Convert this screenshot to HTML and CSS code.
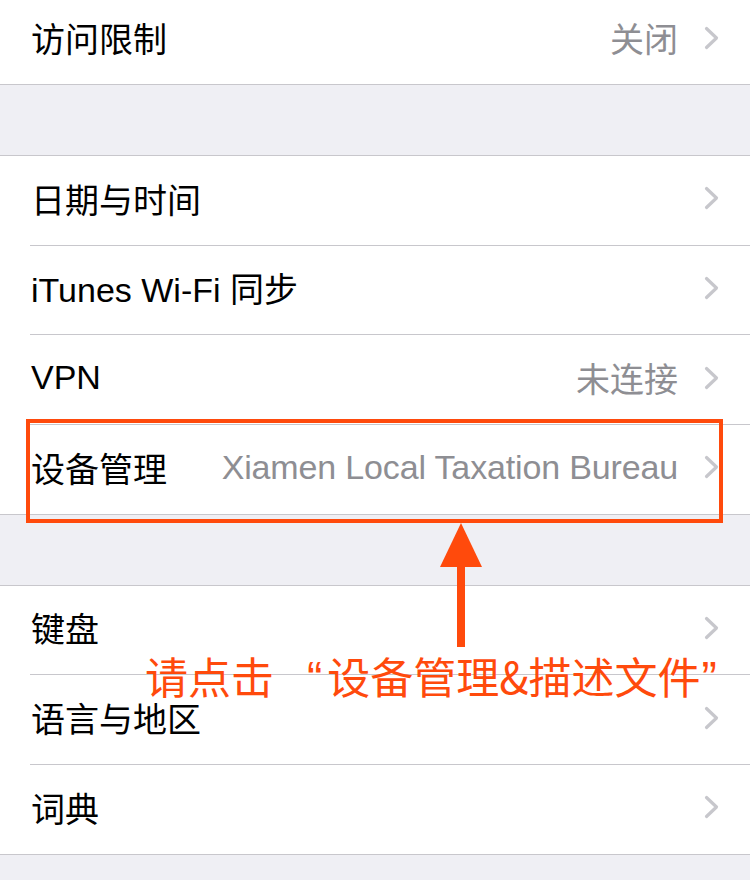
FILE: index.html
```html
<!DOCTYPE html>
<html lang="zh-CN">
<head>
<meta charset="utf-8">
<title>通用</title>
<link rel="stylesheet" href="styles.css">
</head>
<body>
<div class="page">
  <section class="group group-first">
    <div class="row"><span class="label">访问限制</span><span class="detail">关闭</span><svg class="chev" viewBox="0 0 16 24" width="16" height="24"><path d="M2.5 2.5 L12.5 12 L2.5 21.5"/></svg></div>
  </section>

  <section class="group">
    <div class="row"><span class="label">日期与时间</span><svg class="chev" viewBox="0 0 16 24" width="16" height="24"><path d="M2.5 2.5 L12.5 12 L2.5 21.5"/></svg></div>
    <div class="row"><span class="label">iTunes Wi-Fi 同步</span><svg class="chev" viewBox="0 0 16 24" width="16" height="24"><path d="M2.5 2.5 L12.5 12 L2.5 21.5"/></svg></div>
    <div class="row"><span class="label">VPN</span><span class="detail">未连接</span><svg class="chev" viewBox="0 0 16 24" width="16" height="24"><path d="M2.5 2.5 L12.5 12 L2.5 21.5"/></svg></div>
    <div class="row"><span class="label">设备管理</span><span class="detail latin">Xiamen Local Taxation Bureau</span><svg class="chev" viewBox="0 0 16 24" width="16" height="24"><path d="M2.5 2.5 L12.5 12 L2.5 21.5"/></svg></div>
  </section>

  <section class="group group-second">
    <div class="row"><span class="label">键盘</span><svg class="chev" viewBox="0 0 16 24" width="16" height="24"><path d="M2.5 2.5 L12.5 12 L2.5 21.5"/></svg></div>
    <div class="row"><span class="label">语言与地区</span><svg class="chev" viewBox="0 0 16 24" width="16" height="24"><path d="M2.5 2.5 L12.5 12 L2.5 21.5"/></svg></div>
    <div class="row"><span class="label">词典</span><svg class="chev" viewBox="0 0 16 24" width="16" height="24"><path d="M2.5 2.5 L12.5 12 L2.5 21.5"/></svg></div>
  </section>

  <div class="highlight-box"></div>
  <svg class="arrow" viewBox="0 0 46 130" width="46" height="130">
    <polygon points="23,3 44,47 2,47"/>
    <rect x="19" y="46" width="8" height="81"/>
  </svg>
  <div class="note">请点击<span class="q q-open">“</span>设备管理&amp;描述文件<span class="q q-close">”</span></div>
</div>
</body>
</html>
```

FILE: styles.css
```css
html, body {
  margin: 0;
  padding: 0;
  background: #efeff4;
}

.page {
  position: relative;
  width: 750px;
  height: 880px;
  overflow: hidden;
  font-family: "Liberation Sans", "Noto Sans CJK SC", sans-serif;
}

.group {
  background: #ffffff;
  border-top: 1px solid #c8c7cc;
  border-bottom: 1px solid #c8c7cc;
  margin-top: 70px;
}

.group-first {
  margin-top: -5px;
  border-top: none;
}

.row {
  height: 84.67px;
  padding-bottom: 4px;
  margin-left: 30px;
  padding-right: 30px;
  display: flex;
  align-items: center;
  border-bottom: 1px solid #c8c7cc;
}

.group-first .row {
  height: 85px;
}

.row:last-child {
  border-bottom: none;
}

.label {
  font-size: 34px;
  color: #000000;
  padding-left: 1px;
  white-space: nowrap;
}

.detail {
  margin-left: auto;
  font-size: 34px;
  color: #8e8e93;
  white-space: nowrap;
}

.detail.latin {
  letter-spacing: -0.15px;
}

.chev {
  margin-left: 26px;
  flex: none;
}

.row > .label + .chev {
  margin-left: auto;
}

.chev path {
  fill: none;
  stroke: #c7c7cc;
  stroke-width: 3.2;
  stroke-linecap: round;
  stroke-linejoin: round;
}

.highlight-box {
  position: absolute;
  left: 26px;
  top: 419px;
  width: 689px;
  height: 96px;
  border: 4px solid #ff4a0c;
}

.arrow {
  position: absolute;
  left: 438px;
  top: 520px;
}

.arrow polygon,
.arrow rect {
  fill: #ff4a0c;
}

.note {
  position: absolute;
  left: 145px;
  top: 654px;
  font-family: "Noto Sans CJK SC", sans-serif;
  font-size: 43px;
  line-height: 43px;
  color: #ff4a0c;
  white-space: nowrap;
}

.q {
  font-family: "Liberation Sans", sans-serif;
  font-size: 46px;
}

.q-open {
  margin-left: 33px;
  margin-right: 5px;
}

.q-close {
  margin-left: 1px;
}
```
